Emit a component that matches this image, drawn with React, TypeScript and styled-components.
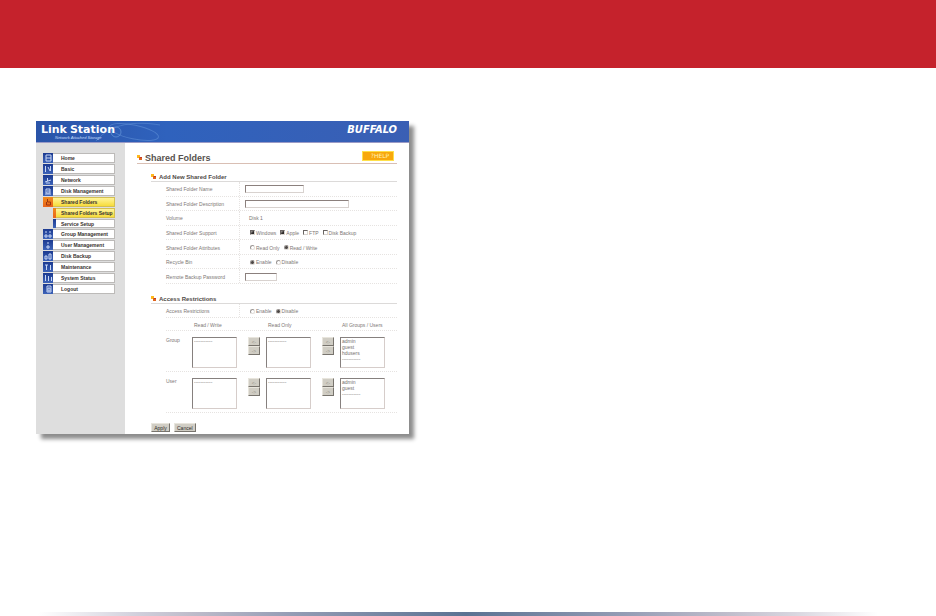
import React from "react";
import styled, { createGlobalStyle } from "styled-components";

const Global = createGlobalStyle`
  *, *::before, *::after { box-sizing: border-box; }
  body { margin: 0; background: #fff; font-family: "Liberation Sans", Arial, sans-serif; }
  h1, h2, ul, p { margin: 0; padding: 0; }
  ul { list-style: none; }
`;

const Page = styled.div`
  min-height: 100vh;
  display: flex;
  flex-direction: column;
`;

const Banner = styled.header`
  height: 68px;
  background: #c5222c;
`;

const Body = styled.main`
  flex: 1;
  padding: 53px 36px 0;
`;

const FootRule = styled.footer`
  height: 4px;
  margin: 0 58px 0 38px;
  background: linear-gradient(90deg, #fff 0%, #d0cfdb 12%, #bfbdcb 18%, #959db5 30%, #5a7292 51%, #959db5 70%, #bfbdcb 82%, #d8d6df 90%, #fff 100%);
`;

const Card = styled.section`
  max-width: 373px;
  display: flex;
  flex-direction: column;
  background: #fff;
  box-shadow: 5px 5px 4px rgba(0, 0, 0, 0.45);
  font-size: 5px;
  line-height: 6px;
  color: #7d7775;
`;

const TopBar = styled.header`
  position: relative;
  height: 22px;
  flex: none;
  display: flex;
  justify-content: space-between;
  padding: 3px 12px 0 5px;
  background: linear-gradient(90deg, #2a54a8, #2f62bd 35%, #3a5fb4);
  border-bottom: 1px solid #9b9bc6;
  color: #fff;
`;

const Swirl = styled.svg`
  position: absolute;
  left: 0;
  top: 0;
  width: 130px;
  height: 21px;
`;

const Brand = styled.div`
  position: relative;
  font-family: "DejaVu Sans", sans-serif;
`;

const Wordmark = styled.div`
  display: flex;
  gap: 3px;
  font-size: 11px;
  font-weight: 700;
  line-height: 11px;
`;

const Tagline = styled.p`
  padding-left: 14px;
  font: italic 4px/5px "Liberation Sans", sans-serif;
  color: #c4dbfa;
`;

const Maker = styled.div`
  font: italic 700 11px/11px "DejaVu Sans Condensed", "DejaVu Sans", sans-serif;
`;

const Columns = styled.div`
  flex: 1;
  display: flex;
`;

const Sidebar = styled.nav`
  width: 89px;
  padding: 10px 10px 0 7px;
  background: #dedede;
`;

const Menu = styled.ul`
  height: 142px;
  display: grid;
  grid-auto-rows: minmax(0, 1fr);
`;

const MenuItem = styled.li<{ $sub?: boolean }>`
  display: flex;
  min-height: 0;
  padding-bottom: 1px;
  padding-left: ${(p) => (p.$sub ? 10 : 0)}px;
`;

const MenuLink = styled.a<{ $on?: boolean }>`
  flex: 1;
  min-height: 0;
  display: flex;
  align-items: stretch;
  border: 1px solid ${(p) => (p.$on ? "#d3bf52" : "#bcbab8")};
  border-left: 0;
  background: ${(p) => (p.$on ? "linear-gradient(#fff49a, #f7dc3a)" : "#fff")};
  color: #37322f;
  font-weight: 700;
  line-height: 8px;
  text-decoration: none;
  white-space: nowrap;
`;

const Tile = styled.span<{ $on?: boolean; $sub?: boolean }>`
  width: ${(p) => (p.$sub ? 3 : 10)}px;
  margin: -1px ${(p) => (p.$sub ? 5 : 8)}px -1px 0;
  flex: none;
  display: flex;
  overflow: hidden;
  background: ${(p) => (p.$on ? "linear-gradient(#f08a1a, #e8641c)" : "linear-gradient(#1c3a90, #3d63b8)")};
  color: ${(p) => (p.$on ? "#9c3410" : "#c9d8f6")};
`;

const Content = styled.div`
  flex: 1;
  padding: 8px 12px 2px;
`;

const TitleRow = styled.div`
  display: flex;
  align-items: center;
  height: 13px;
  padding-right: 3px;
  border-bottom: 1px solid #d9bfb4;
`;

const Title = styled.h1`
  flex: 1;
  padding-top: 2px;
  font-size: 9px;
  line-height: 12px;
  color: #57524f;
`;

const Bullet = styled.svg`
  width: 5px;
  height: 5px;
  margin-right: 3px;
  flex: none;
`;

const Help = styled.button`
  width: 32px;
  height: 10px;
  margin-bottom: 3px;
  padding: 0 0 0 4px;
  border: 1px solid #ffe04a;
  background: #f8a80c;
  color: #fff3b8;
  font: 6px/8px "DejaVu Sans", sans-serif;
`;

const Section = styled.section<{ $gap: number }>`
  margin-top: ${(p) => p.$gap}px;
  padding-left: 14px;
`;

const SectionTitle = styled.h2`
  display: flex;
  align-items: center;
  height: 12px;
  padding-top: 2px;
  border-bottom: 1px solid #dcdad9;
  font-size: 6px;
  line-height: 8px;
  color: #4f4a48;
`;

const Rows = styled.div`
  height: 102px;
  margin-left: 15px;
  display: grid;
  grid-auto-rows: 1fr;
`;

const Row = styled.div`
  min-height: 14px;
  display: flex;
  align-items: center;
  border-bottom: 1px dotted #e6e3e1;
`;

const RowName = styled.label`
  width: 74px;
  padding-top: 1px;
  align-self: stretch;
  display: flex;
  align-items: center;
  border-right: 1px dotted #e6e3e1;
`;

const Choices = styled.div`
  display: flex;
  gap: 4px;
  padding: 1px 0 0 10px;
`;

const Choice = styled.label`
  display: flex;
  align-items: center;
  gap: 1px;
  white-space: nowrap;
`;

const Tick = styled.input`
  appearance: none;
  width: 5px;
  height: 5px;
  margin: 0;
  border: 1px solid;
  background: #fff;
  &[type="checkbox"] {
    border-color: #6b6664 #d8d4d0 #d8d4d0 #6b6664;
  }
  &[type="checkbox"]:checked {
    background: linear-gradient(135deg, #8d8886 20%, #2d2a28 60%);
  }
  &[type="radio"] {
    border-radius: 50%;
    border-color: #9a9593 #e2dedb #e2dedb #9a9593;
  }
  &[type="radio"]:checked {
    background: #4b4644;
  }
`;

const Field = styled.input<{ $w: number }>`
  width: ${(p) => p.$w}px;
  height: 8px;
  margin-left: 5px;
  margin-top: 1px;
  padding: 0 2px;
  border: 1px solid;
  border-color: #8b807d #d8d2cf #d8d2cf #8b807d;
  font-size: 5px;
  background: #fff;
`;

const Plain = styled.span`
  padding: 1px 0 0 9px;
`;

const Transfer = styled.div`
  margin-left: 15px;
`;

const Line = styled.div<{ $head?: boolean }>`
  display: grid;
  grid-template-columns: 26px 45px 29px 45px 29px 45px;
  height: ${(p) => (p.$head ? 13 : 41)}px;
  padding-top: ${(p) => (p.$head ? 4 : 6)}px;
  border-bottom: 1px dotted #e6e3e1;
`;

const Heading = styled.span<{ $col: number }>`
  grid-column: ${(p) => p.$col};
  padding-left: 2px;
  white-space: nowrap;
`;

const List = styled.select`
  appearance: none;
  width: 45px;
  height: 31px;
  padding: 0;
  border: 1px solid;
  border-color: #86807e #d6cdca #d6cdca #86807e;
  border-radius: 0;
  background: #fff;
  color: #77716f;
  font: 5px/6px "Liberation Sans", sans-serif;
  overflow: hidden;
  option {
    min-height: 6px;
    height: 6px;
    padding: 0 1px;
  }
`;

const Arrows = styled.div`
  display: flex;
  flex-direction: column;
  align-items: center;
  padding-left: 5px;
`;

const Push = styled.button`
  height: 9px;
  padding: 0 2px;
  border: 1px solid;
  border-color: #e8e5dd #77736d #77736d #e8e5dd;
  background: #d0cdc4;
  color: #2d2a28;
  font: 5px/6px "Liberation Sans", sans-serif;
`;

const Arrow = styled(Push)`
  width: 12px;
  padding: 0;
  color: #99958c;
`;

const Actions = styled.div`
  display: flex;
  gap: 4px;
  padding: 10px 0 0 14px;
`;

const Action = styled(Push)`
  min-width: 19px;
`;

const Mark = () => (
  <Bullet viewBox="0 0 5 5" aria-hidden="true">
    <rect width="3" height="3" fill="#ffb81c" />
    <rect x="2" y="2" width="3" height="3" fill="#e0641c" />
    <rect x="3" y="2" width="2" height="1" fill="#c03a2a" />
  </Bullet>
);

const glyphs: Record<string, string> = {
  home: "M3 2h5v6h-5z M3 5h5",
  basic: "M2.5 2v6 M5 3l2 4 M7.500 2v5",
  network: "M2 7l6-2 M4.500 3v3 M3 8h4",
  disk: "M3 3h4v4h-4z M4 5h3 M2 8h6",
  folder: "M4.500 2v3h3v3h-4v-3",
  group: "M3 2v2 M7 2v2 M2 6h2v2h-2z M6 6h2v2h-2z",
  user: "M5 2v2 M4 6h2v2h-2z",
  backup: "M2 5h2v3h-2z M6 3h2v5h-2z",
  tools: "M2 3h3 M3.500 3v5 M7.500 3v5",
  status: "M2.500 2v6 M5.500 3v5 M8.500 4v4",
  logout: "M4 2h4v6h-4z M5 4h2v3h-2z",
};

const Glyph = ({ name }: { name: string }) => (
  <svg width="10" height="10" viewBox="0 0 10 10" fill="none" stroke="currentColor" aria-hidden="true">
    <path d={glyphs[name]} />
  </svg>
);

const menu = [
  { text: "Home", icon: "home" },
  { text: "Basic", icon: "basic" },
  { text: "Network", icon: "network" },
  { text: "Disk Management", icon: "disk" },
  { text: "Shared Folders", icon: "folder", on: true },
  { text: "Shared Folders Setup", sub: true, on: true },
  { text: "Service Setup", sub: true },
  { text: "Group Management", icon: "group" },
  { text: "User Management", icon: "user" },
  { text: "Disk Backup", icon: "backup" },
  { text: "Maintenance", icon: "tools" },
  { text: "System Status", icon: "status" },
  { text: "Logout", icon: "logout" },
];

type Option = [text: string, checked: boolean];

const Options = ({ type, name, items }: { type: "checkbox" | "radio"; name: string; items: Option[] }) => (
  <Choices>
    {items.map(([text, checked]) => (
      <Choice key={text}>
        <Tick type={type} name={name} defaultChecked={checked} />
        {text}
      </Choice>
    ))}
  </Choices>
);

const blank = "-----------";

const TransferLine = ({ name, all }: { name: string; all: string[] }) => {
  const lists: [string, string[]][] = [
    ["Read / Write", [blank]],
    ["Read Only", [blank]],
    ["All", all],
  ];
  return (
    <Line>
      <span>{name}</span>
      {lists.map(([title, items], i) => (
        <React.Fragment key={title}>
          {i > 0 && (
            <Arrows>
              <Arrow type="button" aria-label="Move left">&lt;-</Arrow>
              <Arrow type="button" aria-label="Move right">-&gt;</Arrow>
            </Arrows>
          )}
          <List multiple aria-label={`${name} ${title}`}>
            {items.map((t) => (
              <option key={t}>{t}</option>
            ))}
          </List>
        </React.Fragment>
      ))}
    </Line>
  );
};

export default function App() {
  return (
    <Page>
      <Global />
      <Banner />
      <Body>
        <Card>
          <TopBar>
            <Swirl viewBox="0 0 130 21" fill="none" stroke="#6fa0e0" strokeWidth="1" aria-hidden="true">
              <ellipse cx="98" cy="11" rx="25" ry="7" opacity="0.45" transform="rotate(12 98 11)" />
              <path d="M60 20C75 2 100 0 124 4" opacity="0.4" />
              <circle cx="80" cy="11" r="5" opacity="0.6" />
            </Swirl>
            <Brand>
              <Wordmark><span>Link</span><span>Station</span></Wordmark>
              <Tagline>Network Attached Storage</Tagline>
            </Brand>
            <Maker>BUFFALO</Maker>
          </TopBar>
          <Columns>
            <Sidebar>
              <Menu>
                {menu.map((m) => (
                  <MenuItem key={m.text} $sub={m.sub}>
                    <MenuLink href="#" $on={m.on}>
                      <Tile $on={m.on} $sub={m.sub}>{m.icon && <Glyph name={m.icon} />}</Tile>
                      {m.text}
                    </MenuLink>
                  </MenuItem>
                ))}
              </Menu>
            </Sidebar>
            <Content>
              <TitleRow>
                <Mark />
                <Title>Shared Folders</Title>
                <Help type="button">?HELP</Help>
              </TitleRow>
              <Section $gap={6}>
                <SectionTitle><Mark />Add New Shared Folder</SectionTitle>
                <Rows>
                  <Row><RowName htmlFor="name">Shared Folder Name</RowName><Field id="name" $w={59} /></Row>
                  <Row><RowName htmlFor="desc">Shared Folder Description</RowName><Field id="desc" $w={104} /></Row>
                  <Row><RowName as="span">Volume</RowName><Plain>Disk 1</Plain></Row>
                  <Row>
                    <RowName as="span">Shared Folder Support</RowName>
                    <Options type="checkbox" name="support" items={[["Windows", true], ["Apple", true], ["FTP", false], ["Disk Backup", false]]} />
                  </Row>
                  <Row>
                    <RowName as="span">Shared Folder Attributes</RowName>
                    <Options type="radio" name="attributes" items={[["Read Only", false], ["Read / Write", true]]} />
                  </Row>
                  <Row>
                    <RowName as="span">Recycle Bin</RowName>
                    <Options type="radio" name="recycle" items={[["Enable", true], ["Disable", false]]} />
                  </Row>
                  <Row><RowName htmlFor="pass">Remote Backup Password</RowName><Field id="pass" $w={32} /></Row>
                </Rows>
              </Section>
              <Section $gap={8}>
                <SectionTitle><Mark />Access Restrictions</SectionTitle>
                <Transfer>
                  <Row>
                    <RowName as="span">Access Restrictions</RowName>
                    <Options type="radio" name="access" items={[["Enable", false], ["Disable", true]]} />
                  </Row>
                  <Line $head>
                    <Heading $col={2}>Read / Write</Heading>
                    <Heading $col={4}>Read Only</Heading>
                    <Heading $col={6}>All Groups / Users</Heading>
                  </Line>
                  <TransferLine name="Group" all={["admin", "guest", "hdusers", blank]} />
                  <TransferLine name="User" all={["admin", "guest", blank]} />
                </Transfer>
              </Section>
              <Actions>
                <Action type="button">Apply</Action>
                <Action type="button">Cancel</Action>
              </Actions>
            </Content>
          </Columns>
        </Card>
      </Body>
      <FootRule />
    </Page>
  );
}
